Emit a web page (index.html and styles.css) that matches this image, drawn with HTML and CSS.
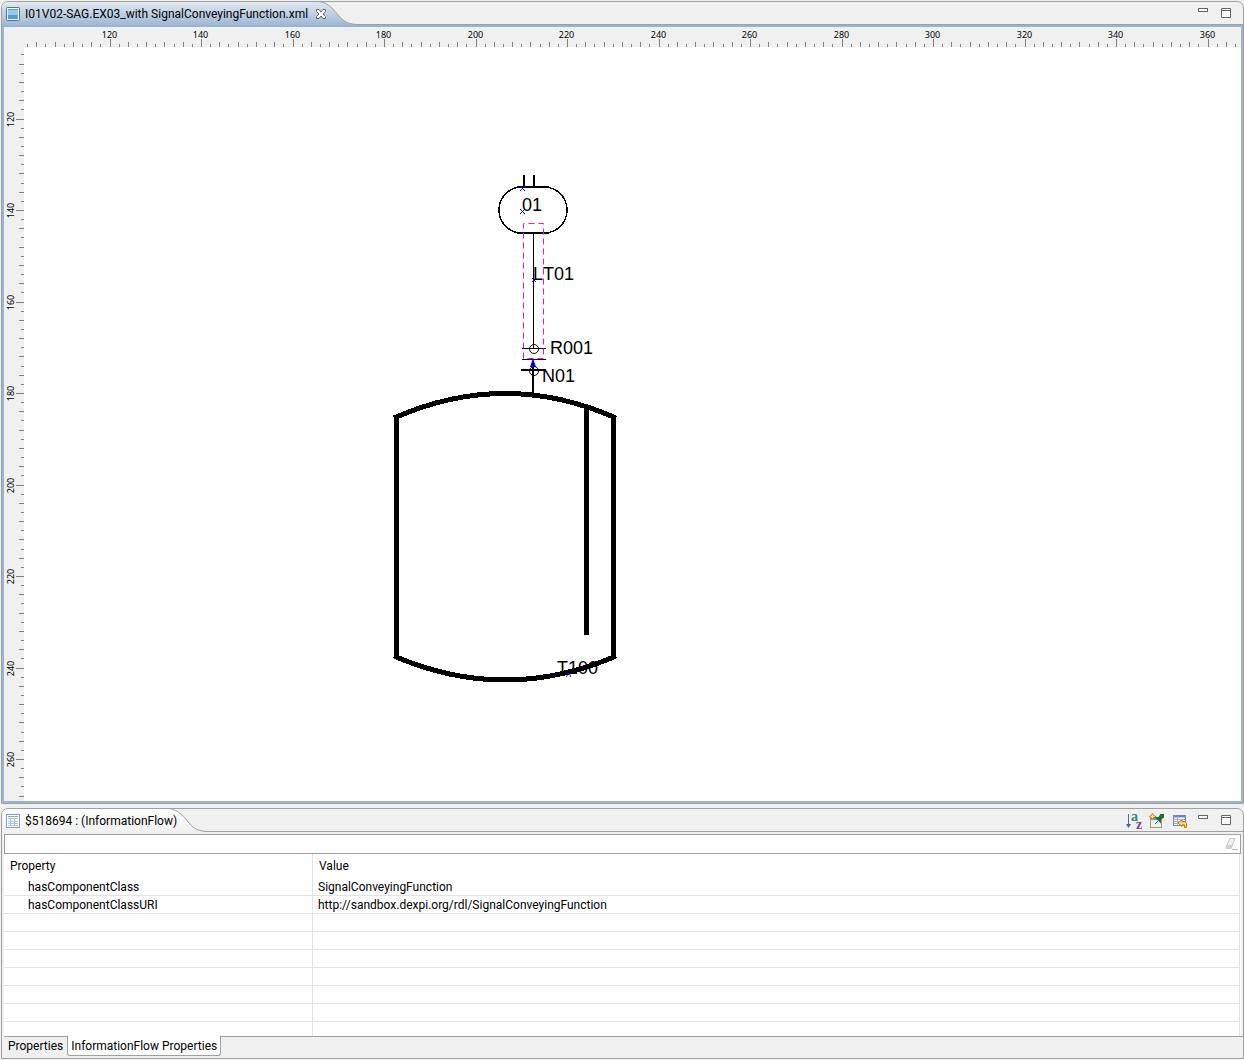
FILE: index.html
```html
<!DOCTYPE html>
<html lang="en">
<head>
<meta charset="utf-8">
<title>I01V02-SAG.EX03_with SignalConveyingFunction.xml</title>
<link rel="stylesheet" href="styles.css">
</head>
<body>
<main class="workbench">
  <section class="part part-active editor">
    <header class="tabbar">
      <div class="tab">
        <svg class="icon" width="16" height="16" viewBox="0 0 16 16" aria-hidden="true">
          <rect x="1.500" y="1.500" width="13" height="13" rx="1" fill="#fff" stroke="#4a6fae"/>
          <rect x="3" y="3" width="10" height="10" fill="#5b9bd8"/>
          <rect x="3" y="4" width="10" height="5" fill="#8fcdf0"/>
        </svg>
        <span class="tab-title">I01V02-SAG.EX03_with SignalConveyingFunction.xml</span>
        <button class="tool close" aria-label="Close">
          <svg width="12" height="12" viewBox="0 0 12 12"><path d="M1.500 1.500H4L6 4L8 1.500H10.500V3.500L8 6L10.500 8.500V10.500H8L6 8L4 10.500H1.500V8.500L4 6L1.500 3.500Z" fill="#fff" stroke="#666"/></svg>
        </button>
      </div>
      <svg class="tab-curve" width="40" height="23" viewBox="0 0 40 23" aria-hidden="true">
        <defs><linearGradient id="activeFill" x1="0" y1="0" x2="0" y2="1"><stop offset="0" stop-color="#e1e9f2"/><stop offset="1" stop-color="#9fb8d4"/></linearGradient></defs>
        <path d="M0 0C10 1 15 8 20 14C25 20 30 22.500 40 22.500V23H0Z" fill="url(#activeFill)"/>
        <path d="M0 -.5C10 1 15 8 20 14C25 20 30 22.500 40 22.500" fill="none" stroke="#a0a0a0"/>
      </svg>
      <div class="tools">
        <button class="tool" aria-label="Minimize"><svg width="16" height="16" viewBox="0 0 16 16"><rect x="3.500" y="2.500" width="9" height="3" fill="#fff" stroke="#666"/></svg></button>
        <button class="tool" aria-label="Maximize"><svg width="16" height="16" viewBox="0 0 16 16"><path d="M3.500 2.500H12.500V11.500H3.500ZM3.500 4.500H12.500" fill="#fff" stroke="#666"/></svg></button>
      </div>
    </header>
    <div class="editor-body">
      <svg class="ruler ruler-top" id="rulerTop" aria-label="Horizontal ruler"></svg>
      <svg class="ruler ruler-left" id="rulerLeft" aria-label="Vertical ruler"></svg>
      <svg class="canvas" aria-label="Tank T100 with level instrument">
        <g transform="translate(-24 -47)">
          <g class="ink tank">
            <path d="M396.500 417V657M613.500 417V657M586.500 406V635"/>
            <path d="M394 418Q505 369 616 418"/>
            <path d="M394 656Q505 704 616 656"/>
          </g>
          <g class="ink pipe">
            <path d="M524 175V187M534 175V187M521 370H546M533 361V394M517 187H549M517 233H549"/>
          </g>
          <rect class="ink bubble" x="499" y="187" width="68" height="46" rx="23"/>
          <g class="ink">
            <path d="M533.500 234V349M522 348.500H546M522 359.500H546"/>
          </g>
          <g class="node">
            <circle cx="534" cy="349" r="4.500"/>
            <circle cx="534" cy="371" r="4.500"/>
          </g>
          <path class="flow" d="M523.500 358.500V223.500H543.500V358.500H523.500"/>
          <path d="M533 358L536 367H530Z" fill="#00f"/>
          <path d="M533.500 363V394" stroke="#000"/>
          <g class="anchor">
            <path d="M520 186L525 191M525 186L520 191M520 209L525 214M525 209L520 214M532 278L536 282M536 278L532 282M566 677L569 673L571 677M553 673.500H557"/>
          </g>
          <g class="label">
            <text x="522" y="211">01</text>
            <text x="533" y="280">LT01</text>
            <text x="550" y="354">R001</text>
            <text x="542" y="382">N01</text>
            <text x="557" y="674">T100</text>
          </g>
        </g>
      </svg>
    </div>
  </section>

  <section class="part properties">
    <header class="tabbar">
      <div class="tab">
        <svg class="icon" width="16" height="16" viewBox="0 0 16 16" aria-hidden="true">
          <rect x="1.500" y="1.500" width="13" height="13" fill="#fff" stroke="#7f9fd0"/>
          <path d="M3 3.500H13" stroke="#8cba7c"/>
          <path d="M3 5.500H13M3 8.500H13M3 10.500H13M3 12.500H13M5.500 5V13M9.500 5V13" stroke="#a9c4ea"/>
        </svg>
        <span class="tab-title">$518694 : (InformationFlow)</span>
      </div>
      <svg class="tab-curve" width="40" height="23" viewBox="0 0 40 23" aria-hidden="true">
        <defs><linearGradient id="plainFill" x1="0" y1="0" x2="0" y2="1"><stop offset="0" stop-color="#fff"/><stop offset="1" stop-color="#f0f0f0"/></linearGradient></defs>
        <path d="M0 0C10 1 15 8 20 14C25 20 30 22.500 40 22.500V23H0Z" fill="url(#plainFill)"/>
        <path d="M0 -.5C10 1 15 8 20 14C25 20 30 22.500 40 22.500" fill="none" stroke="#a0a0a0"/>
      </svg>
      <div class="tools">
        <button class="tool" aria-label="Sort"><svg width="16" height="16" viewBox="0 0 16 16"><path d="M2.500 1V13" stroke="#4d6f96"/><path d="M0 11H5L2.500 15Z" fill="#4d6580"/><text class="glyph" x="5" y="8" fill="#2b8a7c">a</text><text class="glyph" x="10" y="16" fill="#8a3c92">z</text></svg></button>
        <button class="tool" aria-label="Pin"><svg width="16" height="16" viewBox="0 0 16 16"><rect x="1.500" y="4.500" width="11" height="10" fill="#e4f2fb" stroke="#b09a62"/><path d="M2 6H12" stroke="#5b93cf" stroke-width="2"/><path d="M3.500 0L4.500 2.500L7 3.500L4.500 4.500L3.500 7L2.500 4.500L0 3.500L2.500 2.500Z" fill="#ffe9a0" stroke="#b98a2c"/><path d="M6 11L9 8" stroke="#555"/><path d="M8 5L10 5L12 2H14V4L11 6V8Z" fill="#2f8f3f" stroke="#1f6a2c" stroke-width="2"/></svg></button>
        <button class="tool" aria-label="Restore default"><svg width="16" height="16" viewBox="0 0 16 16"><rect x="1.500" y="2.500" width="12" height="10" fill="#fff" stroke="#6f87b5"/><path d="M2 3.500H13" stroke="#6f87b5" stroke-width="2"/><path d="M2 6.500H13M2 8.500H13M2 10.500H13M5.500 4V12" stroke="#9fb2d6"/><path d="M6 10L10 6.500V8.500H12.500L14.500 10.500V14.500H12.500V12H10V13.500Z" fill="#ffd36b" stroke="#b97a1c"/></svg></button>
        <button class="tool" aria-label="Minimize"><svg width="16" height="16" viewBox="0 0 16 16"><rect x="3.500" y="2.500" width="9" height="3" fill="#fff" stroke="#666"/></svg></button>
        <button class="tool" aria-label="Maximize"><svg width="16" height="16" viewBox="0 0 16 16"><path d="M3.500 2.500H12.500V11.500H3.500ZM3.500 4.500H12.500" fill="#fff" stroke="#666"/></svg></button>
      </div>
    </header>
    <div class="filter">
      <input class="filter-input" type="text" aria-label="Filter properties">
      <button class="tool" aria-label="Clear filter"><svg width="16" height="16" viewBox="0 0 16 16"><path d="M7 2.500H12L8 12.500H3.500L3 11Z" fill="#f2f2f2" stroke="#c4c4c4"/><path d="M4.500 8.500L9.500 9L8 12.500H3.500L3 11Z" fill="#d2d2d2"/><path d="M9 13.500H15" stroke="#b8b8b8"/></svg></button>
    </div>
    <div class="grid">
      <table class="props">
        <thead><tr><th class="name" scope="col">Property</th><th scope="col">Value</th></tr></thead>
        <tbody>
          <tr><td class="name">hasComponentClass</td><td>SignalConveyingFunction</td></tr>
          <tr><td class="name">hasComponentClassURI</td><td>http://sandbox.dexpi.org/rdl/SignalConveyingFunction</td></tr>
          <tr><td></td><td></td></tr>
          <tr><td></td><td></td></tr>
          <tr><td></td><td></td></tr>
          <tr><td></td><td></td></tr>
          <tr><td></td><td></td></tr>
          <tr><td></td><td></td></tr>
          <tr><td></td><td></td></tr>
        </tbody>
      </table>
    </div>
    <nav class="pages">
      <button class="page">Properties</button>
      <button class="page page-current">InformationFlow Properties</button>
    </nav>
  </section>
</main>
<script src="ruler.js"></script>
</body>
</html>
```
FILE: styles.css
```css
* { box-sizing: border-box; }
body {
  margin: 0;
  background: #f0f0f0;
  color: #000;
  font: 12px/16px Roboto, "Noto Sans", sans-serif;
}
button { font: inherit; color: inherit; border: 0; padding: 0; background: none; }
svg { display: block; }

.workbench {
  display: flex;
  flex-direction: column;
  gap: 4px;
  min-height: 100vh;
  padding: 1px 0 1px 1px;
}
.part {
  display: flex;
  flex-direction: column;
  border: 1px solid #a0a0a0;
  border-radius: 7px 7px 0 0;
}
.editor { flex: 1; min-height: 300px; }

.tabbar {
  display: flex;
  height: 23px;
  border-bottom: 1px solid #a0a0a0;
}
.tab {
  display: flex;
  align-items: center;
  gap: 4px;
  height: 23px;
  padding-left: 3px;
  border-radius: 6px 0 0 0;
  background: linear-gradient(#fff, #f0f0f0);
}
.part-active .tab { background: linear-gradient(#e1e9f2, #9fb8d4); }
.tab-title, .close { position: relative; z-index: 1; white-space: nowrap; }
.close { margin-left: 3px; }
.tab-curve { flex: none; margin-left: -8px; }
.tools {
  display: flex;
  gap: 7px;
  margin-left: auto;
  padding: 1px 9px 0 0;
}
.tool { display: block; flex: none; }
.tool svg { overflow: visible; }
.glyph { font: bold 14px "Liberation Serif", serif; }

.editor-body {
  flex: 1;
  display: grid;
  grid-template: 20px 1fr / 20px 1fr;
  border: 2px solid #99b4d1;
}
.ruler { width: 100%; height: 100%; overflow: hidden; }
.ruler-top { grid-column: 1 / 3; }
.ruler path { stroke: #808080; shape-rendering: crispEdges; }
.ruler text { font: 9px "Noto Sans", sans-serif; text-anchor: middle; }
.ruler-left { min-height: 0; }
.canvas { width: 100%; height: 100%; background: #fff; overflow: hidden; }
.ink { fill: none; stroke: #000; shape-rendering: crispEdges; }
.node { fill: none; stroke: #000; }
.tank { stroke-width: 5; }
.pipe { stroke-width: 2; }
.bubble { stroke-width: 1.5; }
.flow { fill: none; stroke: #f0f; stroke-dasharray: 6 4; }
.anchor { fill: none; stroke: #00f; }
.label { font: 18px "Liberation Sans", Arial, sans-serif; font-kerning: none; }

.filter {
  display: flex;
  align-items: center;
  height: 20px;
  margin: 2px 2px 0;
  padding-right: 1px;
  border: 1px solid #a0a0a0;
  background: #fff;
}
.filter-input {
  flex: 1;
  min-width: 0;
  height: 18px;
  border: 0;
  outline: 0;
  background: none;
  font: inherit;
}
.grid {
  height: 182px;
  margin: 0 2px;
  padding-right: 1px;
  overflow: hidden;
  background: #fff;
}
.props {
  width: 100%;
  table-layout: fixed;
  border-collapse: separate;
  border-spacing: 0;
}
.props th, .props td {
  height: 18px;
  padding: 0 5px;
  border-right: 1px solid #e3e3e3;
  border-bottom: 1px solid #e3e3e3;
  text-align: left;
  font-weight: normal;
  white-space: nowrap;
}
.props th { height: 24px; padding: 0 6px; border-bottom: 0; }
.props th.name { width: 309px; }
.props td.name { padding-left: 24px; }

.pages {
  display: flex;
  align-items: flex-start;
  height: 22px;
  margin-left: 2px;
  border-top: 1px solid #a0a0a0;
}
.page { height: 18px; padding: 0 4px; white-space: nowrap; }
.page-current {
  height: 20px;
  margin-top: -1px;
  padding: 0 3px;
  border: 1px solid #a0a0a0;
  border-top: 0;
  border-radius: 0 0 3px 3px;
  background: #fff;
}
```
FILE: ruler.js
```js
// Ruler ticks: one every two drawing units, a label every twenty.
const PITCH = 9.15;
const NS = 'http://www.w3.org/2000/svg';

function drawRuler(svg, origin, vertical, first) {
  svg.replaceChildren();
  const box = svg.getBoundingClientRect();
  const length = (vertical ? box.height : box.width) - 2;
  let d = '';
  for (let i = first; origin + i * PITCH < length; i++) {
    const p = Math.floor(origin + i * PITCH) + 0.5;
    const major = i % 10 === 0;
    const len = major ? 8 : i % 2 === 0 ? 5 : 3;
    d += vertical ? `M${20 - len} ${p}H20` : `M${p} ${20 - len}V20`;
    if (major && p + 8 < length) {
      const text = document.createElementNS(NS, 'text');
      text.textContent = 120 + i * 2;
      text.setAttribute('transform', vertical ? `translate(10 ${p}) rotate(-90)` : `translate(${p - 1} 11)`);
      svg.append(text);
    }
  }
  const path = document.createElementNS(NS, 'path');
  path.setAttribute('d', d);
  svg.append(path);
}

function drawRulers() {
  drawRuler(document.getElementById('rulerTop'), 106, false, -9);
  drawRuler(document.getElementById('rulerLeft'), 72, true, -7);
}

drawRulers();
window.addEventListener('resize', drawRulers);
```
